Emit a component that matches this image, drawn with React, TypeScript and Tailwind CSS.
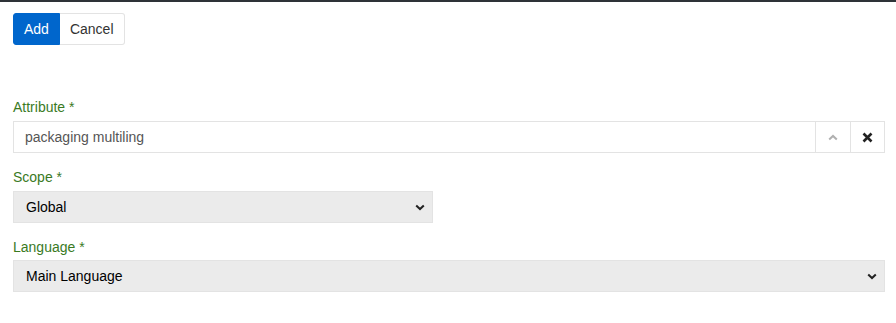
import { useState } from 'react'

function ChevronDown() {
  return (
    <svg width="10" height="7" viewBox="0 0 10 7" className="text-[#222]">
      <path d="M1.2 1.4 L5 5 L8.8 1.4" fill="none" stroke="currentColor" strokeWidth="2" />
    </svg>
  )
}

function SelectField({ value, width }: { value: string; width: string }) {
  return (
    <div
      className={`flex h-8 items-center justify-between border border-[#e3e3e3] bg-[#ebebeb] pl-[12px] pr-[7px] text-[14px] text-black ${width}`}
    >
      <span>{value}</span>
      <ChevronDown />
    </div>
  )
}

export default function App() {
  const [attribute, setAttribute] = useState('packaging multiling')

  return (
    <div
      className="min-h-[323px] border-t-2 border-[#2e3338] bg-white pl-[13px] pr-[11px] pt-[11px]"
      style={{ fontFamily: '"Liberation Sans", Arial, sans-serif' }}
    >
      <div className="flex">
        <button
          type="button"
          className="h-8 rounded-l-[3px] border border-[#0066cc] bg-[#0066cc] px-[10px] text-[14px] text-white"
        >
          Add
        </button>
        <button
          type="button"
          className="h-8 rounded-r-[3px] border border-l-0 border-[#e3e3e3] bg-white px-[10px] text-[14px] text-[#333]"
        >
          Cancel
        </button>
      </div>

      <div className="mt-[52px] space-y-[14px]">
        <div>
          <label className="mb-1 block text-[14px] leading-5 text-[#3a7a1f]">Attribute *</label>
          <div className="flex h-8 border border-[#e3e3e3] bg-white">
            <input
              value={attribute}
              onChange={(e) => setAttribute(e.target.value)}
              className="min-w-0 flex-1 bg-transparent pl-[11px] text-[14px] text-[#555] outline-none"
            />
            <button
              type="button"
              className="flex w-[35px] items-center justify-center border-l border-[#e3e3e3]"
            >
              <svg width="10" height="7" viewBox="0 0 10 7" className="text-[#b0b0b0]">
                <path d="M1.2 5.6 L5 2 L8.8 5.6" fill="none" stroke="currentColor" strokeWidth="2" />
              </svg>
            </button>
            <button
              type="button"
              className="flex w-[34px] items-center justify-center border-l border-[#e3e3e3]"
            >
              <svg width="11" height="11" viewBox="0 0 11 11" className="text-[#222]">
                <path d="M1.5 1.5 L9.5 9.5 M9.5 1.5 L1.5 9.5" fill="none" stroke="currentColor" strokeWidth="2.6" />
              </svg>
            </button>
          </div>
        </div>

        <div>
          <label className="mb-1 block text-[14px] leading-5 text-[#3a7a1f]">Scope *</label>
          <SelectField value="Global" width="w-[420px]" />
        </div>

        <div>
          <label className="mb-[3px] block text-[14px] leading-5 text-[#3a7a1f]">Language *</label>
          <SelectField value="Main Language" width="w-full" />
        </div>
      </div>
    </div>
  )
}
